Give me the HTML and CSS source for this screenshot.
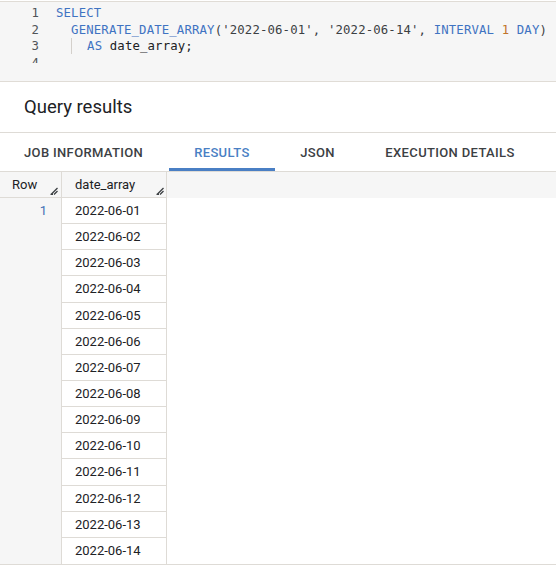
FILE: index.html
```html
<!DOCTYPE html>
<html>
<head>
<meta charset="utf-8">
<link rel="stylesheet" href="styles.css">
</head>
<body>
<div class="editor">
  <div class="lines">
    <div class="line"><span class="ln">1</span><span class="code"><span class="kw">SELECT</span></span></div>
    <div class="line"><span class="ln">2</span><span class="code">  <span class="kw">GENERATE_DATE_ARRAY</span><span class="pn">(</span><span class="str">'2022-06-01'</span><span class="pn">, </span><span class="str">'2022-06-14'</span><span class="pn">, </span><span class="kw">INTERVAL</span> <span class="num">1</span> <span class="kw2">DAY</span><span class="pn">)</span></span></div>
    <div class="line"><span class="ln">3</span><span class="code"><span class="guide">  </span>  <span class="kw">AS</span> <span class="id">date_array;</span></span></div>
    <div class="line"><span class="ln">4</span><span class="code"></span></div>
  </div>
</div>
<div class="title">Query results</div>
<div class="tabs">
  <div class="tab">JOB INFORMATION</div>
  <div class="tab active">RESULTS</div>
  <div class="tab">JSON</div>
  <div class="tab">EXECUTION DETAILS</div>
</div>
<div class="grid">
  <div class="hcell rowh"><span>Row</span><svg class="rz" width="8" height="8" viewBox="0 0 8 8"><path d="M1 7.5 L7.5 1 M4 7.5 L7.5 4 M0.5 7.5 H3" stroke="#3c4043" stroke-width="1.3" fill="none"/></svg></div>
  <div class="hcell colh"><span>date_array</span><svg class="rz" width="8" height="8" viewBox="0 0 8 8"><path d="M1 7.5 L7.5 1 M4 7.5 L7.5 4 M0.5 7.5 H3" stroke="#3c4043" stroke-width="1.3" fill="none"/></svg></div>
  <div class="hcell fill"></div>

  <div class="rn">1</div><div class="dc">2022-06-01</div><div class="fc"></div>
  <div class="rn"></div><div class="dc">2022-06-02</div><div class="fc"></div>
  <div class="rn"></div><div class="dc">2022-06-03</div><div class="fc"></div>
  <div class="rn"></div><div class="dc">2022-06-04</div><div class="fc"></div>
  <div class="rn"></div><div class="dc">2022-06-05</div><div class="fc"></div>
  <div class="rn"></div><div class="dc">2022-06-06</div><div class="fc"></div>
  <div class="rn"></div><div class="dc">2022-06-07</div><div class="fc"></div>
  <div class="rn"></div><div class="dc">2022-06-08</div><div class="fc"></div>
  <div class="rn"></div><div class="dc">2022-06-09</div><div class="fc"></div>
  <div class="rn"></div><div class="dc">2022-06-10</div><div class="fc"></div>
  <div class="rn"></div><div class="dc">2022-06-11</div><div class="fc"></div>
  <div class="rn"></div><div class="dc">2022-06-12</div><div class="fc"></div>
  <div class="rn"></div><div class="dc">2022-06-13</div><div class="fc"></div>
  <div class="rn"></div><div class="dc last">2022-06-14</div><div class="fc"></div>
</div>
</body>
</html>
```

FILE: styles.css
```css
html, body {
  margin: 0;
  padding: 0;
  background: #ffffff;
}
body {
  width: 556px;
  height: 566px;
  overflow: hidden;
  font-family: Roboto, "Liberation Sans", sans-serif;
  color: #202124;
}
.editor {
  margin-top: 1px;
  height: 79px;
  background: #f6f6f6;
  border-top: 1px solid #e0dcd6;
  border-bottom: 1px solid #e0dcd6;
}
.lines {
  overflow: hidden;
  padding-top: 3px;
  box-sizing: border-box;
  height: 61px;
  font-family: "DejaVu Sans Mono", "Liberation Mono", monospace;
  font-size: 12.3px;
  letter-spacing: 0.15px;
}
.line {
  display: flex;
  height: 16.5px;
  line-height: 16.5px;
  white-space: pre;
}
.ln {
  width: 39px;
  text-align: right;
  color: #505458;
  flex: none;
  letter-spacing: 0;
}
.code {
  margin-left: 17px;
  color: #37474f;
}
.kw, .kw2 { color: #3f73c2; }
.num { color: #c0742a; }
.str { color: #3c4043; }
.pn { color: #3c4043; }
.id { color: #202124; }
.guide {
  display: inline-block;
  border-right: 1px solid #d4d0cb;
  width: 15px;
  height: 16px;
  vertical-align: top;
}
.title {
  height: 51px;
  box-sizing: border-box;
  padding-left: 24px;
  padding-top: 13px;
  font-size: 18.5px;
  line-height: 24px;
  color: #202124;
  border-bottom: 1px solid #dedbd6;
}
.tabs {
  display: flex;
  height: 38px;
}
.tab {
  padding: 2px 25.5px 0 25px;
  font-size: 13px;
  font-weight: 500;
  letter-spacing: 0.35px;
  line-height: 36px;
  color: #3c4043;
  box-sizing: border-box;
  height: 38px;
}
.tab:first-child { padding-left: 24px; padding-right: 26px; }
.tab.active {
  color: #4a7fc4;
  border-bottom: 3px solid #4a7fc4;
}
.grid {
  display: grid;
  grid-template-columns: 62px 105px 1fr;
  grid-template-rows: 26px;
  grid-auto-rows: 26.15px;
  border-top: 1px solid #dedbd6;
  border-bottom: 1px solid #dedbd6;
  font-size: 13px;
}
.hcell {
  background: #f6f6f6;
  display: flex;
  align-items: center;
  box-sizing: border-box;
  color: #202124;
}
.rowh {
  padding-left: 12px;
  padding-right: 3px;
  border-right: 1px solid #dedbd6;
  border-bottom: 1px solid #dedbd6;
}
.colh {
  padding-left: 13px;
  padding-right: 2px;
  border-right: 1px solid #dedbd6;
  border-bottom: 1px solid #dedbd6;
}
.rz {
  margin-left: auto;
  align-self: flex-end;
  margin-bottom: 2px;
}
.rn {
  background: #f6f6f6;
  border-right: 1px solid #dedbd6;
  text-align: right;
  padding-right: 14px;
  color: #3f6fb5;
  line-height: 25px;
  box-sizing: border-box;
}
.dc {
  border-right: 1px solid #dedbd6;
  border-bottom: 1px solid #dedbd6;
  padding-left: 13px;
  line-height: 25px;
  box-sizing: border-box;
  color: #202124;
}
.dc.last { border-bottom: none; }
.fc { background: #ffffff; }
```
